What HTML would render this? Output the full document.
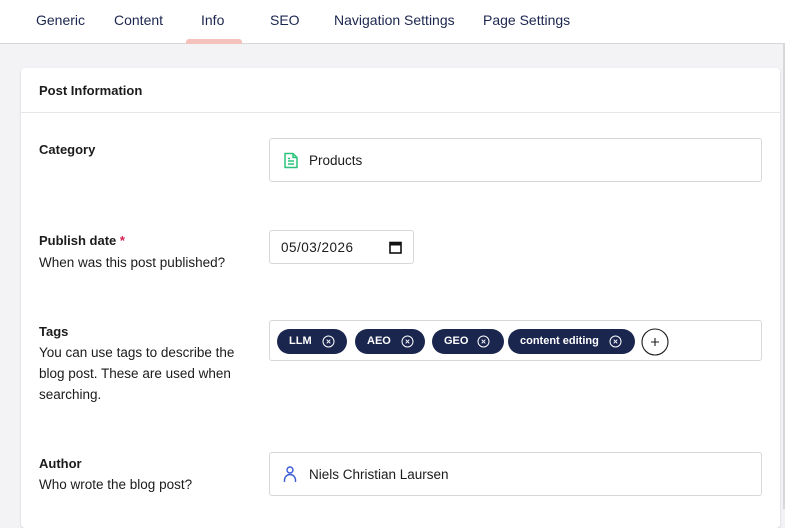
<!DOCTYPE html>
<html><head><style>
*{box-sizing:border-box;margin:0;padding:0}
body{width:785px;height:509px;overflow:hidden;background:#f3f3f5;font-family:"Liberation Sans",sans-serif;color:#1b1b1b;font-size:13.5px;position:relative}
.tabs{position:absolute;left:0;top:0;width:785px;height:44px;background:#fff;border-bottom:1px solid #d8d7d9}
.tab{position:absolute;top:12px;font-size:14px;color:#1b264f}
.ind{position:absolute;left:186px;top:39px;width:56px;height:5px;background:#f5c1bc;border-radius:3px 3px 0 0}
.card{position:absolute;left:21px;top:68px;width:759px;height:460px;background:#fff;border-radius:4px;box-shadow:0 1px 2px rgba(0,0,0,.15)}
.hd{position:absolute;left:0;top:0;width:100%;height:45px;border-bottom:1px solid #e6e6e6;font-weight:bold;font-size:13px;padding:15px 18px}
.lbl{position:absolute;left:39px;font-weight:bold;font-size:13px}
.desc{position:absolute;left:39px;font-size:13.5px;line-height:21px;color:#1b1b1b;width:210px}
.inp{position:absolute;border:1px solid #d8d7d9;border-radius:3px;background:#fff}
.chip{position:absolute;top:8px;height:25px;background:#1b264f;color:#fff;border-radius:13px;font-weight:bold;font-size:11px;padding:6px 0 0 12px}
.chip svg{position:absolute;top:6px}
.scroll{position:absolute;left:783px;top:44px;width:2px;height:465px;background:#d8d7d9}
</style></head><body>
<div class="tabs">
<span class="tab" style="left:36px">Generic</span>
<span class="tab" style="left:114px">Content</span>
<span class="tab" style="left:201px">Info</span>
<span class="tab" style="left:270px">SEO</span>
<span class="tab" style="left:334px">Navigation Settings</span>
<span class="tab" style="left:483px">Page Settings</span>
<div class="ind"></div>
</div>
<div class="card"><div class="hd">Post Information</div></div>
<div class="scroll"></div>

<div class="lbl" style="top:142px">Category</div>
<div class="inp" style="left:269px;top:138px;width:493px;height:44px">
<svg style="position:absolute;left:13px;top:13px" width="16" height="17" viewBox="0 0 16 17" fill="none" stroke="#2bc37c" stroke-width="1.5" stroke-linejoin="round"><path d="M2 1.5h8l4 4v10H2z"/><path d="M10 1.5v4h4M5 9h6M5 12h6M5 6.5h2"/></svg>
<span style="position:absolute;left:39px;top:14px">Products</span></div>

<div class="lbl" style="top:233px">Publish date <span style="color:#d42054">*</span></div>
<div class="desc" style="top:252px">When was this post published?</div>
<div class="inp" style="left:269px;top:230px;width:145px;height:34px">
<span style="position:absolute;left:11px;top:9px;letter-spacing:.5px">05/03/2026</span>
<svg style="position:absolute;left:119px;top:10px" width="13" height="13" viewBox="0 0 13 13"><rect x="1" y="1.5" width="11" height="10.5" fill="none" stroke="#111" stroke-width="1.6"/><rect x="1" y="1.5" width="11" height="3" fill="#111"/></svg></div>

<div class="lbl" style="top:324px">Tags</div>
<div class="desc" style="top:342px">You can use tags to describe the blog post. These are used when searching.</div>
<div class="inp" style="left:269px;top:320px;width:493px;height:41px">
<div class="chip" style="left:7px;width:70px">LLM<svg style="left:45px" width="13" height="13" viewBox="0 0 13 13" fill="none" stroke="#fff" stroke-width="1"><circle cx="6.5" cy="6.5" r="5.5"/><path d="M4.7 4.7l3.6 3.6M8.3 4.7l-3.6 3.6"/></svg></div>
<div class="chip" style="left:85px;width:70px">AEO<svg style="left:46px" width="13" height="13" viewBox="0 0 13 13" fill="none" stroke="#fff" stroke-width="1"><circle cx="6.5" cy="6.5" r="5.5"/><path d="M4.7 4.7l3.6 3.6M8.3 4.7l-3.6 3.6"/></svg></div>
<div class="chip" style="left:162px;width:72px">GEO<svg style="left:45px" width="13" height="13" viewBox="0 0 13 13" fill="none" stroke="#fff" stroke-width="1"><circle cx="6.5" cy="6.5" r="5.5"/><path d="M4.7 4.7l3.6 3.6M8.3 4.7l-3.6 3.6"/></svg></div>
<div class="chip" style="left:238px;width:127px">content editing<svg style="left:101px" width="13" height="13" viewBox="0 0 13 13" fill="none" stroke="#fff" stroke-width="1"><circle cx="6.5" cy="6.5" r="5.5"/><path d="M4.7 4.7l3.6 3.6M8.3 4.7l-3.6 3.6"/></svg></div>
<svg style="position:absolute;left:371px;top:7px" width="28" height="28" viewBox="0 0 28 28" fill="none" stroke="#1b1b1b" stroke-width="1.1"><circle cx="14" cy="14" r="13"/><path d="M14 10v8M10 14h8"/></svg>
</div>

<div class="lbl" style="top:456px">Author</div>
<div class="desc" style="top:474px">Who wrote the blog post?</div>
<div class="inp" style="left:269px;top:452px;width:493px;height:44px">
<svg style="position:absolute;left:13px;top:13px" width="14" height="17" viewBox="0 0 14 17" fill="none" stroke="#3a5bd6" stroke-width="1.4"><circle cx="7" cy="4" r="3"/><path d="M1.5 16v-2a5.5 5.5 0 0111 0v2"/></svg>
<span style="position:absolute;left:39px;top:14px">Niels Christian Laursen</span></div>
</body></html>
